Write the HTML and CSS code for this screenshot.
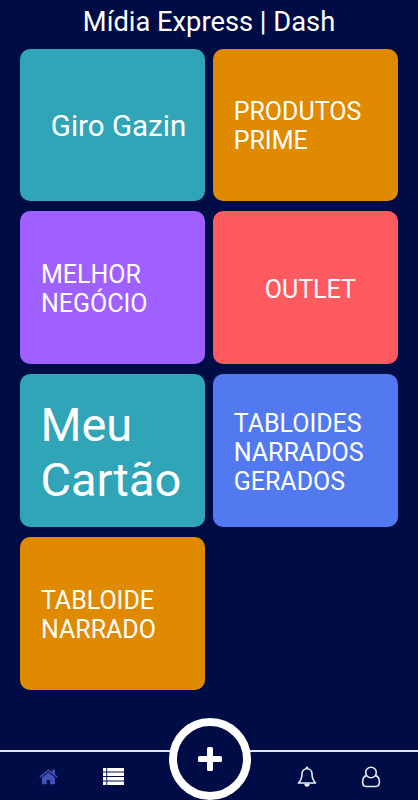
FILE: index.html
```
<!DOCTYPE html>
<html lang="pt-br">
<head>
  <meta charset="UTF-8">
  <meta name="viewport" content="width=device-width, initial-scale=1.0">
  <title>Mídia Express | Dash</title>
  <link rel="stylesheet" href="styles.css">
</head>
<body>
  <header class="header">
    <h1>Mídia Express | Dash</h1>
  </header>
  <main class="cards">
    <a class="card teal giro"><span>Giro Gazin</span></a>
    <a class="card orange"><span>PRODUTOS PRIME</span></a>
    <a class="card purple"><span>MELHOR NEGÓCIO</span></a>
    <a class="card red center"><span>OUTLET</span></a>
    <a class="card teal big"><span>Meu Cartão</span></a>
    <a class="card blue"><span>TABLOIDES NARRADOS GERADOS</span></a>
    <a class="card orange"><span>TABLOIDE NARRADO</span></a>
  </main>
  <nav class="navbar">
    <a class="nav-item active" aria-label="Início">
      <svg width="19" height="16" viewBox="0 0 19 16">
        <path d="M9.5 3.2 3 8.6V14.6q0 .6.6.6H7.8V10.9H11.1V15.2H15.4q.6 0 .6-.6V8.6Z" fill="currentColor"/>
        <path d="M.8 8.2 9.5 1.2 18.2 8.2" fill="none" stroke="currentColor" stroke-width="1.5"/>
        <path d="M13.2.5H16V6.2L13.2 4Z" fill="currentColor"/>
      </svg>
    </a>
    <a class="nav-item list" aria-label="Lista">
      <svg width="21" height="17" viewBox="0 0 21 17" fill="currentColor">
        <path d="M0 0H3.3V3.4H0ZM4.2 0H21V3.4H4.2ZM0 4.5H3.3V7.9H0ZM4.2 4.5H21V7.9H4.2ZM0 9.1H3.3V12.5H0ZM4.2 9.1H21V12.5H4.2ZM0 13.6H3.3V17H0ZM4.2 13.6H21V17H4.2Z"/>
      </svg>
    </a>
    <a class="nav-add" aria-label="Adicionar">
      <svg width="24" height="24" viewBox="0 0 24 24" fill="currentColor">
        <rect x="9" y="0" width="6" height="24" rx="1.6"/>
        <rect x="0" y="9" width="24" height="6" rx="1.6"/>
      </svg>
    </a>
    <a class="nav-item bell" aria-label="Notificações">
      <svg width="20" height="22" viewBox="0 0 20 22">
        <path d="M10 2.7C6.9 2.7 5 5 5 7.8 5 12.2 3.8 14.8 1.4 17H18.6C16.2 14.8 15 12.2 15 7.8 15 5 13.1 2.7 10 2.7Z" fill="none" stroke="currentColor" stroke-width="1.6" stroke-linejoin="round"/>
        <circle cx="10" cy="1.8" r="1.3" fill="currentColor"/>
        <path d="M7.2 17.5H12.8Q12.5 20.7 10 20.7T7.2 17.5Z" fill="currentColor"/>
      </svg>
    </a>
    <a class="nav-item" aria-label="Perfil">
      <svg width="20" height="22" viewBox="0 0 20 22" fill="none" stroke="currentColor" stroke-width="1.6">
        <circle cx="10" cy="6.5" r="5.3"/>
        <path d="M5.6 9.6C2.7 10.3 1.6 13 1.6 16.1 1.6 18.8 2.8 20.5 5.1 20.5H14.9C17.2 20.5 18.4 18.8 18.4 16.1 18.4 13 17.3 10.3 14.4 9.6"/>
      </svg>
    </a>
  </nav>
</body>
</html>
```

FILE: styles.css
```
* {
  box-sizing: border-box;
}
body {
  margin: 0;
  height: 100vh;
  display: flex;
  flex-direction: column;
  background-color: #000c46;
  font-family: Roboto, sans-serif;
  color: #fff;
  overflow: hidden;
}
.header {
  height: 48.5px;
  padding-top: 6px;
  text-align: center;
}
.header h1 {
  margin: 0;
  font-size: 27.3px;
  font-weight: 400;
  line-height: 32px;
}
.cards {
  flex: 1;
  display: grid;
  grid-template-columns: 1fr 1fr;
  grid-auto-rows: 152.5px;
  gap: 10.4px 8px;
  padding: 0 20px 0 20.4px;
}
.card {
  display: flex;
  align-items: center;
  padding: 3px 20.5px 0;
  border-radius: 10px;
  font-size: 25px;
  line-height: 29px;
}
.giro {
  justify-content: flex-end;
  padding-right: 19px;
  font-size: 29.5px;
}
.center {
  justify-content: center;
  padding-left: 30px;
}
.big {
  padding-left: 20px;
  font-size: 47px;
  line-height: 55px;
}
.teal { background-color: #30a5b8; }
.orange { background-color: #df8a00; }
.purple { background-color: #a05fff; }
.red { background-color: #ff5a5f; }
.blue { background-color: #5279f0; }

.navbar {
  height: 50px;
  display: grid;
  grid-template-columns: 66px 66px 1fr 66px 66px;
  padding: 0 14px 0 15px;
  border-top: 2px solid #dfe3f5;
}
.nav-item {
  display: flex;
  justify-content: center;
  align-items: center;
  padding-top: 1px;
  color: #e8ebfa;
}
.nav-item.list {
  padding-right: 2px;
  color: #fff;
}
.nav-item.bell {
  padding-left: 3px;
}
.nav-item.active {
  color: #4351b5;
}
/* Botão redondo por cima da linha */
.nav-add {
  display: flex;
  justify-content: center;
  align-items: center;
  justify-self: center;
  width: 82px;
  height: 82px;
  margin-top: -34px;
  border: 8px solid #fff;
  border-radius: 50%;
  background-color: #000c46;
  color: #fff;
}
```
